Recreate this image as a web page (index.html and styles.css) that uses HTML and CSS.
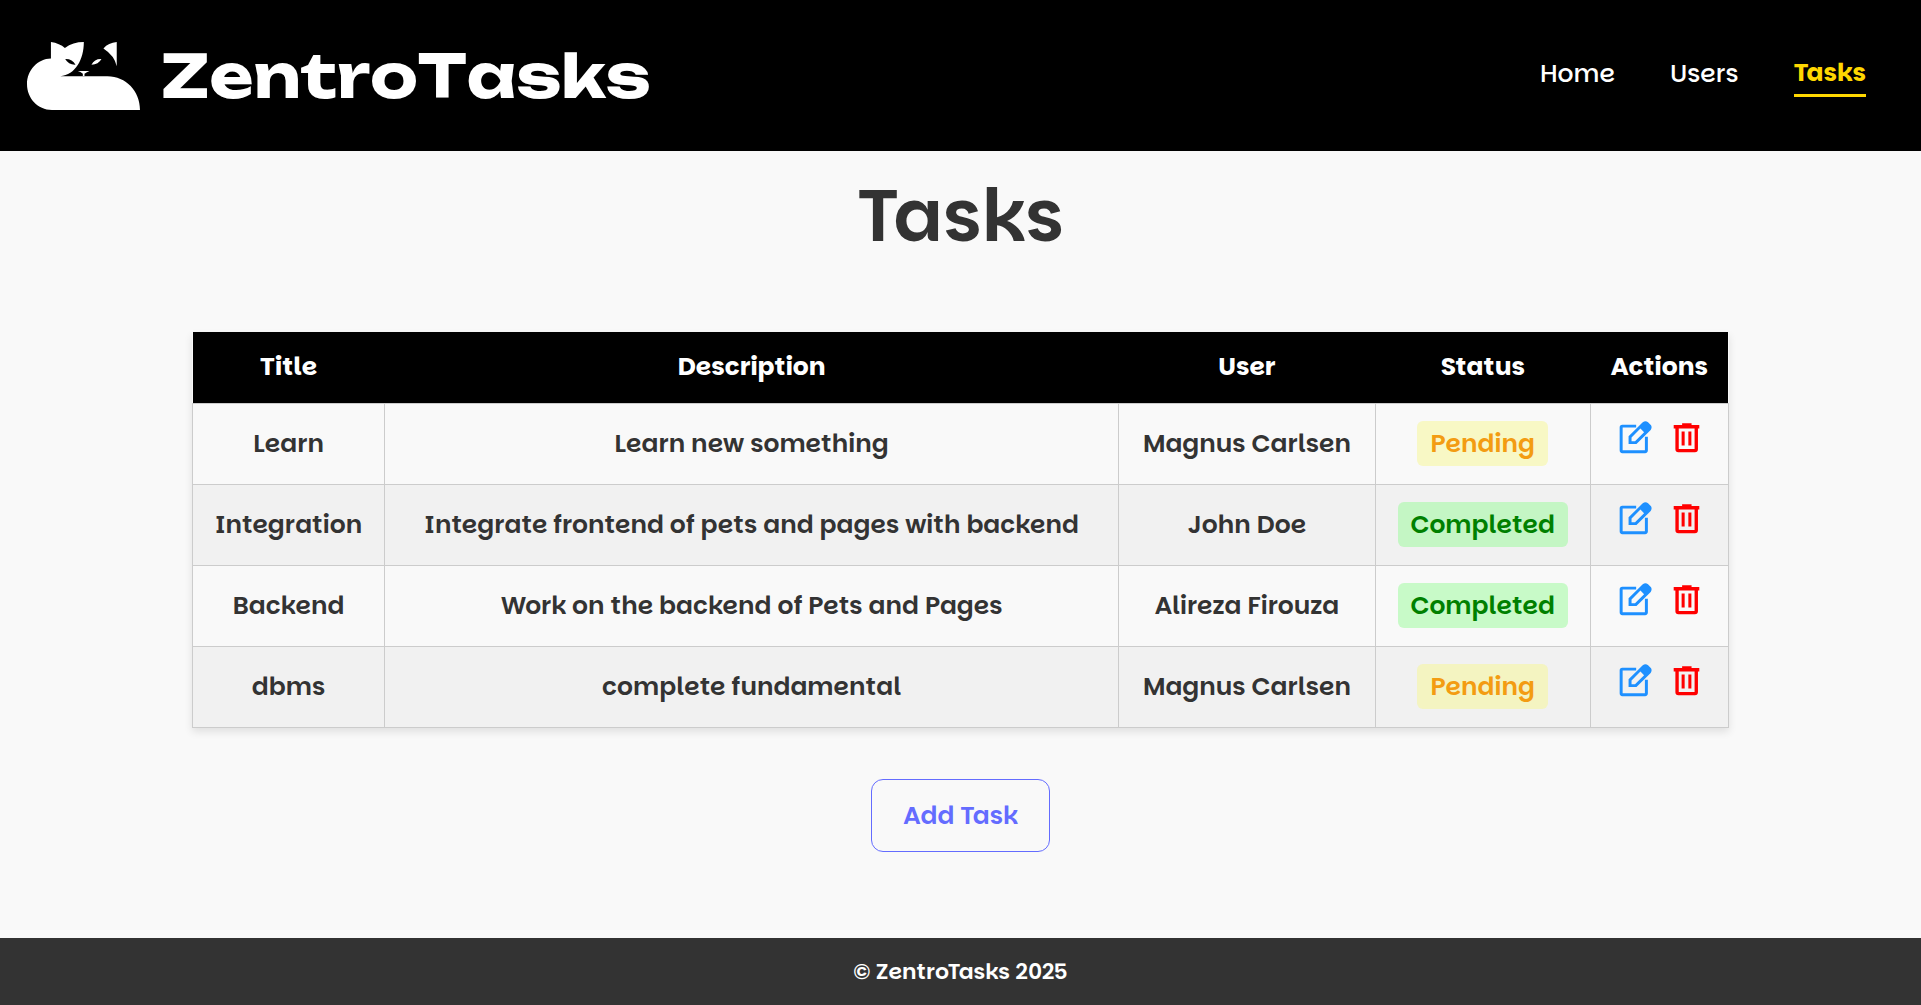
FILE: index.html
```html
<!DOCTYPE html>
<html lang="en">
<head>
  <meta charset="utf-8">
  <meta name="viewport" content="width=device-width, initial-scale=1">
  <title>ZentroTasks</title>
  <link rel="stylesheet" href="styles.css">
</head>
<body>
  <svg class="sprite" aria-hidden="true">
    <symbol id="icon-edit" viewBox="55 60 100 100">
      <path d="M107 75.500H65Q61.500 75.500 61.500 79V149Q61.500 153 65 153H134Q138 153 138 149V108" fill="none" stroke="currentColor" stroke-width="9"/>
      <path fill="currentColor" fill-rule="evenodd" d="M84 106L127 64Q135 58 143 64L152 73Q156 80 151 87L108 130H84ZM93 110V121H103.500L131 94L120 83Z"/>
    </symbol>
    <symbol id="icon-trash" viewBox="218 68 80 92">
      <path fill="currentColor" d="M220 77H245V72H273V77H296V87H220Z"/>
      <path d="M230 84V149Q230 153 234 153H283Q287 153 287 149V84" fill="none" stroke="currentColor" stroke-width="10"/>
      <path d="M248 96V138M268 96V138" stroke="currentColor" stroke-width="9"/>
    </symbol>
  </svg>

  <header class="site-header">
    <a class="brand" href="#">
      <svg class="brand-mark" viewBox="80 66 340 204" aria-hidden="true">
        <path fill="#fff" d="M152 66Q178 70 194 84Q218 66 251 66C251 118 226 165 180 169H322C378 169 420 214 420 270H155C112 270 80 235 80 192C80 150 112 116 152 115Z"/>
        <path fill="#000" d="M195 117Q216 116 226 134Q205 135 195 117Z"/>
        <path fill="#fff" d="M274 134Q283 116 304 117Q295 134 274 134ZM350 66Q325 68 310 85Q344 107 350 139ZM233 153H268Q260 156 253 161V168H248V161Q241 155 233 153Z"/>
      </svg>
      <span class="brand-name">ZentroTasks</span>
    </a>
    <nav class="nav">
      <a class="nav-link" href="#">Home</a>
      <a class="nav-link" href="#">Users</a>
      <a class="nav-link active" href="#" aria-current="page">Tasks</a>
    </nav>
  </header>

  <main class="content">
    <h1 class="page-title">Tasks</h1>
    <table class="tasks">
      <colgroup>
        <col class="col-title"><col class="col-description"><col class="col-user"><col class="col-status"><col class="col-actions">
      </colgroup>
      <thead>
        <tr><th>Title</th><th>Description</th><th>User</th><th>Status</th><th>Actions</th></tr>
      </thead>
      <tbody>
        <tr>
          <td>Learn</td><td>Learn new something</td><td>Magnus Carlsen</td>
          <td><span class="status pending">Pending</span></td>
          <td><div class="actions"><button class="icon-button edit" aria-label="Edit"><svg class="icon-edit"><use href="#icon-edit"/></svg></button><button class="icon-button delete" aria-label="Delete"><svg class="icon-trash"><use href="#icon-trash"/></svg></button></div></td>
        </tr>
        <tr>
          <td>Integration</td><td>Integrate frontend of pets and pages with backend</td><td>John Doe</td>
          <td><span class="status completed">Completed</span></td>
          <td><div class="actions"><button class="icon-button edit" aria-label="Edit"><svg class="icon-edit"><use href="#icon-edit"/></svg></button><button class="icon-button delete" aria-label="Delete"><svg class="icon-trash"><use href="#icon-trash"/></svg></button></div></td>
        </tr>
        <tr>
          <td>Backend</td><td>Work on the backend of Pets and Pages</td><td>Alireza Firouza</td>
          <td><span class="status completed">Completed</span></td>
          <td><div class="actions"><button class="icon-button edit" aria-label="Edit"><svg class="icon-edit"><use href="#icon-edit"/></svg></button><button class="icon-button delete" aria-label="Delete"><svg class="icon-trash"><use href="#icon-trash"/></svg></button></div></td>
        </tr>
        <tr>
          <td>dbms</td><td>complete fundamental</td><td>Magnus Carlsen</td>
          <td><span class="status pending">Pending</span></td>
          <td><div class="actions"><button class="icon-button edit" aria-label="Edit"><svg class="icon-edit"><use href="#icon-edit"/></svg></button><button class="icon-button delete" aria-label="Delete"><svg class="icon-trash"><use href="#icon-trash"/></svg></button></div></td>
        </tr>
      </tbody>
    </table>
    <button class="add-task">Add Task</button>
  </main>

  <footer class="site-footer">© ZentroTasks 2025</footer>
</body>
</html>
```

FILE: styles.css
```css
* {
  box-sizing: border-box;
}

body {
  margin: 0;
  min-height: 100vh;
  display: flex;
  flex-direction: column;
  background: #f9f9f9;
  color: #333;
  font-family: Parkinsans, Poppins, Inter, sans-serif;
  font-size: 25px;
  font-weight: 600;
  line-height: 37px;
}

.sprite {
  display: none;
}

.site-header {
  display: flex;
  align-items: center;
  justify-content: space-between;
  padding: 36px 55px 35px 27px;
  background: #000;
}

.brand {
  display: flex;
  align-items: center;
  gap: 21px;
  color: #fff;
  text-decoration: none;
}

.brand-mark {
  width: 113px;
  height: 68px;
}

.brand-name {
  font-family: Unbounded, "DejaVu Sans", sans-serif;
  font-size: 60px;
  font-weight: 700;
  font-kerning: none;
  line-height: 80px;
}

.nav {
  display: flex;
  align-items: center;
  gap: 55px;
  padding-bottom: 2px;
}

.nav-link {
  padding-bottom: 3px;
  color: #fff;
  font-weight: 500;
  text-decoration: none;
}

.nav-link.active {
  border-bottom: 3px solid #ffd700;
  color: #ffd700;
  font-weight: 700;
}

.content {
  flex: 1;
  display: flex;
  flex-direction: column;
  align-items: center;
  padding: 11px 0 84px;
}

.page-title {
  margin: 0 0 62px;
  font-size: 73px;
  font-weight: 600;
  line-height: 108px;
}

.tasks {
  width: 80%;
  table-layout: fixed;
  border-collapse: collapse;
  box-shadow: 0 4px 8px rgba(0, 0, 0, 0.1);
  text-align: center;
}

.col-title {
  width: 12.5%;
}

.col-user {
  width: 16.7%;
}

.col-status {
  width: 14%;
}

.col-actions {
  width: 9%;
}

.tasks th {
  padding: 16px 0 18px;
  background: #000;
  color: #fff;
  font-weight: 700;
}

.tasks td {
  padding: 17px 0 18px;
  border: 1px solid #ccc;
}

.tasks tbody tr:nth-child(even) {
  background: #f1f1f1;
}

.status {
  display: inline-block;
  padding: 4px 13px;
  border-radius: 6px;
}

.pending {
  background: rgba(247, 247, 145, 0.5);
  color: #f39c12;
}

.completed {
  background: rgba(152, 251, 152, 0.5);
  color: #008000;
}

.actions {
  display: flex;
  justify-content: center;
  gap: 21px;
  padding-bottom: 12px;
}

.icon-button {
  display: flex;
  align-items: center;
  padding: 0;
  border: 0;
  background: none;
  cursor: pointer;
}

.edit {
  color: #1e90ff;
}

.delete {
  color: #f00;
}

.icon-edit {
  width: 33px;
  height: 33px;
}

.icon-trash {
  width: 27px;
  height: 31px;
}

.add-task {
  margin-top: 51px;
  padding: 17px 31px;
  border: 1px solid #646cff;
  border-radius: 12px;
  background: none;
  color: #646cff;
  font: inherit;
  cursor: pointer;
}

.site-footer {
  padding: 15px;
  background: #333;
  color: #fff;
  font-size: 22px;
  text-align: center;
}
```
